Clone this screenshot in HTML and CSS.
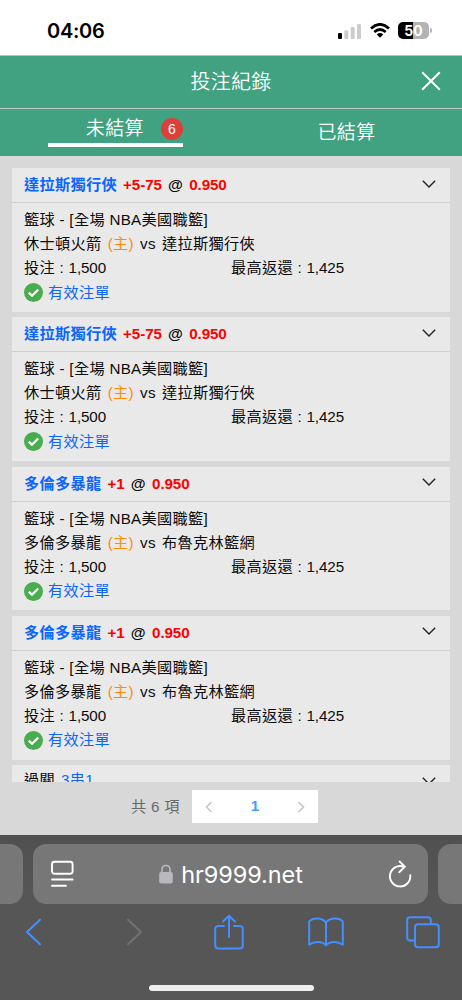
FILE: index.html
```html
<!DOCTYPE html>
<html lang="zh-Hant">
<head>
  <meta charset="UTF-8" />
  <meta name="viewport" content="width=device-width, initial-scale=1.0" />
  <title>投注紀錄</title>
  <link rel="stylesheet" href="styles.css">
</head>
<body>
  <div class="status-bar">
    <span class="time">04:06</span>
    <svg class="signal" width="24" height="16" viewBox="0 0 24 16">
      <rect x="0" y="10" width="4" height="6" rx="1" fill="#000" />
      <rect x="6.3" y="7.5" width="4" height="8.5" rx="1" fill="#ccc" />
      <rect x="12.7" y="4" width="4" height="12" rx="1" fill="#ccc" />
      <rect x="19" y="1" width="4" height="15" rx="1" fill="#ccc" />
    </svg>
    <svg class="wifi" width="20" height="15" viewBox="0 0 20 15">
      <path d="M1 5.5Q10-2.8 19 5.5M4.3 9Q10 4 15.7 9" fill="none" stroke="#000" stroke-width="2.7" />
      <path d="M6.8 11.4Q10 8.8 13.2 11.4L10 14.7Z" />
    </svg>
    <div class="battery"><span>50</span></div>
  </div>

  <div class="header">
    <div class="title">投注紀錄</div>
    <svg class="close" width="20" height="20" viewBox="0 0 20 20"><path d="M1.2 1.2L18.8 18.8M18.8 1.2L1.2 18.8" /></svg>
  </div>
  <div class="tabs">
    <div class="tab active"><div class="tab-label">未結算<span class="count">6</span></div></div>
    <div class="tab">已結算</div>
  </div>

  <div class="content">
    <div class="list" id="list"></div>
    <div class="pagination">
      <span class="total">共 6 項</span>
      <div class="pager">
        <svg width="8" height="12" viewBox="0 0 8 12"><path d="M6.5 1L1.5 6L6.5 11" /></svg>
        <span class="page">1</span>
        <svg width="8" height="12" viewBox="0 0 8 12"><path d="M1.5 1L6.5 6L1.5 11" /></svg>
      </div>
    </div>
  </div>

  <div class="browser">
    <div class="address-row">
      <div class="side-tab"></div>
      <div class="address">
        <svg class="reader" width="23" height="28" viewBox="0 0 23 28">
          <rect x="1" y="1.8" width="20.6" height="12" rx="2.5" />
          <path d="M1 19.5H21.6M1 25.8H15" />
        </svg>
        <div class="url">
          <svg width="14" height="20" viewBox="0 0 14 20">
            <path d="M3 9V5.5C3 .2 11 .2 11 5.5V9" fill="none" stroke="#b9b8bf" stroke-width="1.6" />
            <rect x=".2" y="8" width="13.6" height="11.5" rx="2" fill="#b9b8bf" />
          </svg>
          <span>hr9999.net</span>
        </div>
        <svg class="reload" width="24" height="28" viewBox="0 0 24 28">
          <path d="M22.3 15.2A10.2 10.2 0 1 1 15.5 6.6M11.6 1.5L16.8 6.7L11.2 12.2" />
        </svg>
      </div>
      <div class="side-tab"></div>
    </div>
    <div class="toolbar">
      <svg class="back" width="17" height="28" viewBox="0 0 17 28"><path d="M15 1.8L2 14L15 26.2" /></svg>
      <svg class="forward" width="17" height="28" viewBox="0 0 17 28"><path d="M2 1.8L15 14L2 26.2" /></svg>
      <svg class="share" width="30" height="36" viewBox="0 0 30 36"><path d="M10 12H4.5Q1.2 12 1.2 15V31.5Q1.2 34.5 4.5 34.5H25.5Q28.8 34.5 28.8 31.5V15Q28.8 12 25.5 12H20M15 23V2M9 7.5L15 1.7L21 7.5" /></svg>
      <svg class="book" width="36" height="30" viewBox="0 0 36 30"><path d="M18 5.5C14 .2 5 .2 1.2 4.5V27.8C6 24 14 24 18 28.3C22 24 30 24 34.8 27.8V4.5C31 .2 22 .2 18 5.5V28" /></svg>
      <svg width="34" height="33" viewBox="0 0 34 33"><path d="M9 24.5H4Q1.2 24.5 1.2 21.7V4Q1.2 1.2 4 1.2H22Q24.8 1.2 24.8 4V8" /><rect x="9" y="8.3" width="23.8" height="23" rx="3" /></svg>
    </div>
    <div class="home-indicator"></div>
  </div>

  <script>
    const bets = [
      { team: '達拉斯獨行俠', line: '+5-75', home: '休士頓火箭', away: '達拉斯獨行俠' },
      { team: '達拉斯獨行俠', line: '+5-75', home: '休士頓火箭', away: '達拉斯獨行俠' },
      { team: '多倫多暴龍', line: '+1', home: '多倫多暴龍', away: '布魯克林籃網' },
      { team: '多倫多暴龍', line: '+1', home: '多倫多暴龍', away: '布魯克林籃網' }
    ];
    const arrow = '<svg class="arrow" width="14" height="8" viewBox="0 0 14 8"><path d="M.8 .8L7 7L13.2 .8" /></svg>';
    const check = '<svg width="19" height="19" viewBox="0 0 19 19"><circle cx="9.5" cy="9.5" r="9.5" fill="#49ad50" /><path d="M4.8 9.6L8 12.8L14.2 6.5" fill="none" stroke="#fff" stroke-width="2.2" /></svg>';

    let html = '';
    bets.forEach(bet => {
      html += `
        <div class="card">
          <div class="card-head"><div class="pick"><span class="blue">${bet.team}</span> <span class="red num">${bet.line}</span> @ <span class="red num">0.950</span></div>${arrow}</div>
          <div class="card-body">
            <div>籃球 - [全場 NBA美國職籃]</div>
            <div class="match">${bet.home} <span class="orange">(主)</span> vs ${bet.away}</div>
            <div class="amounts"><span>投注 : <span class="num">1,500</span></span><span>最高返還 : <span class="num">1,425</span></span></div>
            <div class="valid">${check}<span>有效注單</span></div>
          </div>
        </div>`;
    });
    html += `<div class="card"><div class="card-head parlay"><div class="pick">過關 <span class="blue">3串1</span></div>${arrow}</div></div>`;
    document.getElementById('list').innerHTML = html;
  </script>
</body>
</html>
```
FILE: styles.css
```css
* {
  box-sizing: border-box;
}
body {
  margin: 0;
  height: 1000px;
  overflow: hidden;
  display: flex;
  flex-direction: column;
  font-family: "Liberation Sans", "Noto Sans CJK TC", sans-serif;
  background-color: #d8d8d8;
}
svg {
  display: block;
  flex: none;
}
.status-bar {
  height: 55px;
  flex: none;
  display: flex;
  align-items: center;
  padding: 6px 33px 0 47px;
  background: #fff;
}
.time {
  flex: 1;
  font: 600 20px Inter, sans-serif;
  letter-spacing: -0.3px;
}
.signal { margin-right: 8px; }
.wifi { margin-right: 8px; }
.battery {
  width: 31px;
  height: 17px;
  border-radius: 5px;
  background: linear-gradient(90deg, #000 50%, #b3b3b3 50%);
  color: #fff;
  font: bold 14px/17px Inter, sans-serif;
  text-align: center;
  position: relative;
}
.battery::after {
  content: "";
  position: absolute;
  right: -3px;
  top: 6px;
  width: 2px;
  height: 5px;
  border-radius: 0 2px 2px 0;
  background: #b3b3b3;
}
.header {
  height: 54px;
  flex: none;
  display: flex;
  align-items: center;
  padding: 0 21px 2px 41px;
  background: #40a280;
  border-top: 1px solid #9bd0bd;
  border-bottom: 1px solid #bdc9c4;
  color: #fff;
}
.title {
  flex: 1;
  text-align: center;
  font-size: 20px;
  font-weight: 350;
  letter-spacing: 0.3px;
  padding-bottom: 1px;
}
.close path {
  stroke: #fff;
  stroke-width: 2;
}
.tabs {
  height: 47px;
  flex: none;
  display: flex;
  background: #40a280;
  color: #fff;
  font-size: 19px;
  font-weight: 350;
  letter-spacing: 0.4px;
}
.tab {
  flex: 1;
  text-align: center;
  line-height: 47px;
}
.active {
  display: flex;
  justify-content: center;
  align-items: flex-start;
}
.tab-label {
  width: 135px;
  height: 38px;
  padding-top: 6px;
  line-height: 32px;
  display: flex;
  align-items: center;
  justify-content: flex-end;
  border-bottom: 4px solid #fff;
}
.count {
  width: 22px;
  height: 22px;
  margin-left: 17px;
  border-radius: 50%;
  background: #dc403b;
  font-size: 14px;
  line-height: 22px;
  text-align: center;
  letter-spacing: 0;
}
.content {
  height: 679px;
  flex: none;
  padding: 12px 12px 0;
}
.list {
  height: 614px;
  overflow: hidden;
  color: #0c0c0c;
  font-size: 15.2px;
  letter-spacing: 0.3px;
}
.card {
  height: 143.8px;
  margin-bottom: 5.5px;
  background: #e9e9e9;
}
.card-head {
  height: 35px;
  display: flex;
  align-items: center;
  justify-content: space-between;
  padding: 0 14px 3px 12px;
  border-bottom: 1.5px solid #d0d0d0;
  font-weight: bold;
}
.pick {
  word-spacing: 1.6px;
  padding-bottom: 1px;
}
.num { letter-spacing: -0.1px; }
.match { word-spacing: 1.7px; }
.parlay { font-weight: normal; }
.parlay .pick { padding-bottom: 5px; }
.arrow path {
  fill: none;
  stroke: #222;
  stroke-width: 1.4;
}
.blue { color: #0b66ff; }
.red { color: #ff0000; }
.orange { color: #ff8c00; }
.card-body {
  padding: 5px 12px 0;
  line-height: 24px;
}
.amounts {
  display: grid;
  grid-template-columns: 1fr 1fr;
}
.valid {
  height: 25px;
  display: flex;
  align-items: center;
  gap: 5px;
  color: #0b66ff;
}
.pagination {
  display: flex;
  align-items: center;
  padding: 8px 0 0 119px;
  color: #686868;
  font-size: 15.2px;
}
.total {
  width: 61px;
  padding-bottom: 4px;
  letter-spacing: 0.3px;
}
.pager {
  width: 126px;
  height: 33px;
  display: flex;
  align-items: center;
  justify-content: space-between;
  padding: 0 13px;
  background: #fff;
}
.pager path {
  fill: none;
  stroke: #c0c4cc;
  stroke-width: 1.5;
}
.page {
  color: #409eff;
  font-weight: bold;
  padding-bottom: 2px;
}
.browser {
  flex: 1;
  background: linear-gradient(#505050, #565656 60px);
}
.address-row {
  display: grid;
  grid-template-columns: 23px 395px 24px;
  justify-content: space-between;
  height: 69px;
  padding-top: 9px;
}
.side-tab,
.address {
  height: 60px;
  background: #777;
}
.side-tab:first-child { border-radius: 0 13px 13px 0; }
.side-tab:last-child { border-radius: 13px 0 0 13px; }
.address {
  border-radius: 13px;
  display: flex;
  align-items: center;
  justify-content: space-between;
  padding: 0 16px 0 18px;
}
.reader,
.reload {
  fill: none;
  stroke: #fff;
  stroke-width: 1.9;
  stroke-linecap: round;
}
.url {
  display: flex;
  align-items: center;
  gap: 8px;
  color: #fff;
  font: 23.5px Inter, sans-serif;
  letter-spacing: -0.1px;
}
.toolbar {
  height: 56px;
  display: flex;
  align-items: center;
  padding-left: 25px;
}
.toolbar svg {
  fill: none;
  stroke: #438fff;
  stroke-width: 2;
  stroke-linecap: round;
  stroke-linejoin: round;
}
.toolbar .back { margin-right: 84px; }
.toolbar .forward {
  margin-right: 71px;
  stroke: #717171;
}
.toolbar .share { margin-right: 64px; }
.toolbar .book { margin-right: 62px; }
.home-indicator {
  width: 165px;
  height: 6px;
  margin: 25px auto 0;
  border-radius: 3px;
  background: #eee;
}
```
